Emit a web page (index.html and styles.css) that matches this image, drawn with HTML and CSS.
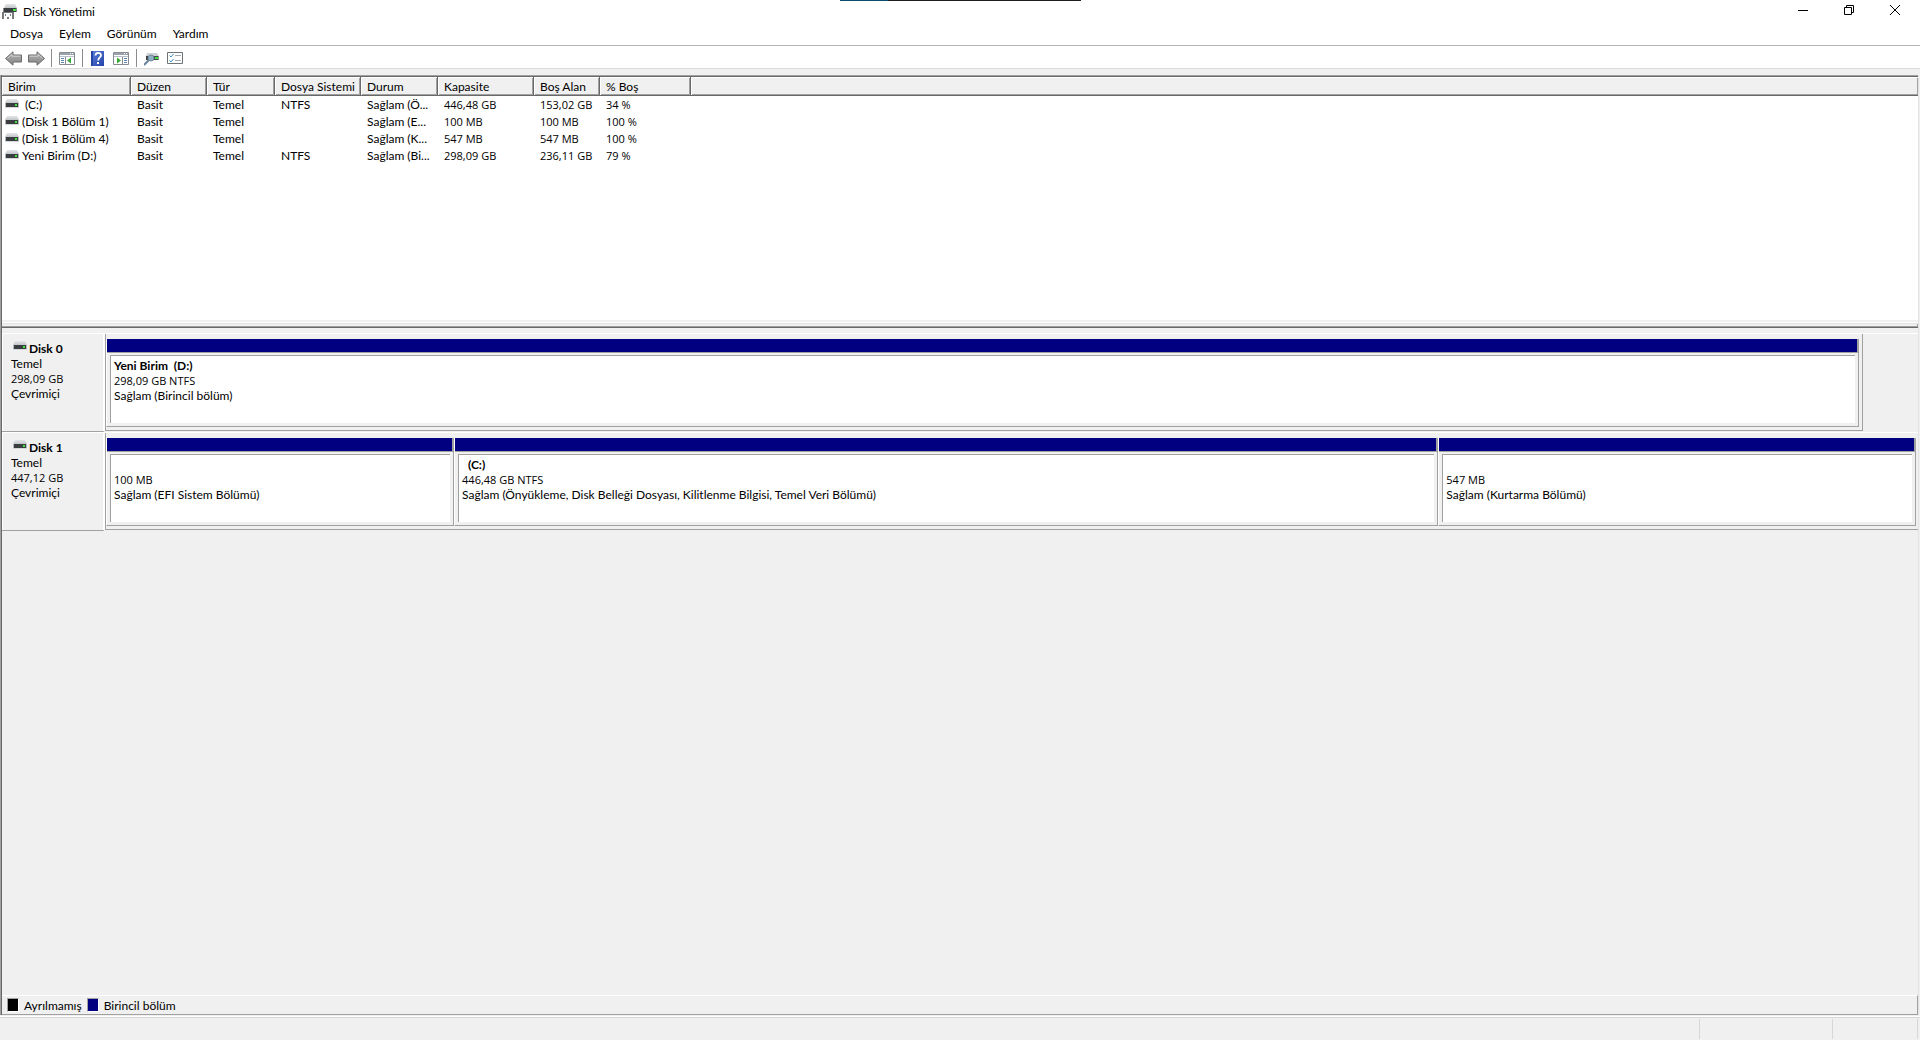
FILE: index.html
```html
<!DOCTYPE html>
<html lang="tr">
<head>
<meta charset="utf-8">
<title>Disk Yönetimi</title>
<link rel="stylesheet" href="styles.css">
</head>
<body>
<svg class="defs" aria-hidden="true">
  <defs>
    <linearGradient id="metal" x1="0" y1="0" x2="0" y2="1"><stop offset="0" stop-color="#e4e6e8"/><stop offset="1" stop-color="#c2c5c8"/></linearGradient>
    <linearGradient id="arrow" x1="0" y1="0" x2="0" y2="1"><stop offset="0" stop-color="#b4b4b4"/><stop offset="1" stop-color="#858585"/></linearGradient>
    <linearGradient id="book" x1="0" y1="0" x2="1" y2="1"><stop offset="0" stop-color="#5c80dc"/><stop offset="1" stop-color="#2443a8"/></linearGradient>
    <symbol id="drive" viewBox="0 0 14 9">
      <path d="M2 0h10l2 4H0z" fill="url(#metal)"/>
      <path d="M0 4h14v4H0z" fill="#3b3e40"/>
      <path d="M0 4h1v4H0zM13 4h1v4h-1z" fill="#b4b8bb"/>
      <path d="M0 8h14v1H0z" fill="#d5d7d9"/>
      <path d="M10 5h2v2h-2z" fill="#3fe53f"/>
    </symbol>
    <symbol id="left-arrow" viewBox="0 0 17 15">
      <path d="M.5 7.500L8 .8v3.200h8.500v7H8v3.200z" fill="url(#arrow)" stroke="#6b6b6b"/>
      <path d="M2.500 7.500L7 3.300v1.900h8.300" fill="none" stroke="#cfcfcf"/>
    </symbol>
  </defs>
</svg>
<div class="taskbar-edge"></div>
<div class="window">
  <header class="titlebar">
    <svg class="app-icon" viewBox="0 0 16 16">
      <path d="M4 0h9l2 4H2z" fill="url(#metal)"/>
      <path d="M1 4h14v4H1z" fill="#3b3e40"/><path d="M1 4h1v4H1zM14 4h1v4h-1z" fill="#85898c"/>
      <path d="M11 5h3v2h-3z" fill="#3fe53f"/>
      <path d="M0 8h12v7H0z" fill="#75797c"/>
      <path d="M2 9h8v6H2z" fill="#fff"/><path d="M3 10h1v2H3zM8 10h1v2H8zM5 13h2v2H5z" fill="#75797c"/>
    </svg>
    <h1 class="title">Disk Yönetimi</h1>
    <div class="window-controls">
      <button type="button" aria-label="Simge durumuna küçült"><svg viewBox="0 0 10 10"><path d="M0 5.500h10"/></svg></button>
      <button type="button" aria-label="Geri yükle"><svg viewBox="0 0 10 10"><path d="M.5 2.500h7v7h-7zM2.500 2.500v-2h7v7h-2"/></svg></button>
      <button type="button" aria-label="Kapat"><svg viewBox="0 0 10 10"><path d="M0 0l10 10M10 0L0 10"/></svg></button>
    </div>
  </header>
  <nav class="menubar">
    <button type="button">Dosya</button>
    <button type="button">Eylem</button>
    <button type="button">Görünüm</button>
    <button type="button">Yardım</button>
  </nav>
  <div class="toolbar">
    <button type="button" aria-label="Geri"><svg viewBox="0 0 17 15"><use href="#left-arrow"/></svg></button>
    <button type="button" aria-label="İleri"><svg viewBox="0 0 17 15"><g transform="translate(17 0) scale(-1 1)"><use href="#left-arrow"/></g></svg></button>
    <span class="separator"></span>
    <button type="button" aria-label="Konsol ağacını göster"><svg viewBox="0 0 17 15">
      <path d="M.5 1.500h15v12H.5z" fill="#fff" stroke="#878c92"/><path d="M1 2h14v2H1z" fill="#9ba3ac"/><path d="M11 2h1v1h-1zM13 2h1v1h-1z" fill="#fff"/><path d="M1 5h14v1H1z" fill="#b9c0c7"/>
      <path d="M6 6h1v7H6z" fill="#878c92"/><path d="M2 7h3v1H2zM2 9h3v1H2zM2 11h3v1H2z" fill="#5b85a9"/><path d="M8 9.500l4-3v6z" fill="#36a832"/></svg></button>
    <span class="separator"></span>
    <button type="button" aria-label="Yardım"><svg viewBox="0 0 17 15">
      <path d="M1 0h13v15H1z" fill="url(#book)"/><path d="M1 0h2v15H1z" fill="#2545a6"/>
      <path d="M5.500 4.500C5.500 1 11 1 11 4.300 11 6.500 8.200 6.500 8.200 9.500" fill="none" stroke="#fff" stroke-width="1.800"/><path d="M7 11h2v2H7z" fill="#fff"/></svg></button>
    <button type="button" aria-label="Eylem bölmesini göster"><svg viewBox="0 0 17 15">
      <path d="M.5 1.500h15v12H.5z" fill="#fff" stroke="#878c92"/><path d="M1 2h14v2H1z" fill="#9ba3ac"/><path d="M11 2h1v1h-1zM13 2h1v1h-1z" fill="#fff"/><path d="M1 5h14v1H1z" fill="#b9c0c7"/>
      <path d="M9 6h1v7H9z" fill="#878c92"/><path d="M11 7h3v1h-3zM11 9h3v1h-3zM11 11h3v1h-3z" fill="#5b85a9"/><path d="M8 9.500l-4-3v6z" fill="#36a832"/></svg></button>
    <span class="separator"></span>
    <button type="button" aria-label="Diskleri yeniden tara"><svg viewBox="0 0 17 15">
      <path d="M3 2h10l2 3H2z" fill="#cfd2d4"/><path d="M2 5h13v4H2z" fill="#3e4346"/><path d="M14 5h1v4h-1z" fill="#8b8f92"/><path d="M11 6h3v2h-3z" fill="#3fe53f"/>
      <path d="M5 9l-5 5" stroke="#68839a" stroke-width="2"/><circle cx="7" cy="7" r="3" fill="#8fb0c4" stroke="#6f8796"/></svg></button>
    <button type="button" aria-label="Görünüm ayarları"><svg viewBox="0 0 17 15">
      <path d="M.5 1.500h15v11H.5z" fill="#fff" stroke="#6e7378"/><path d="M8 4h6v1H8zM8 9h6v1H8z" fill="#a6abb0"/>
      <path d="M2.500 4.500L4 6l2.500-3M2.500 9.500L4 11l2.500-3" fill="none" stroke="#3b8cc9"/></svg></button>
  </div>
  <main class="console">
    <section class="volume-list">
      <table>
        <colgroup><col class="c-name"><col class="c-layout"><col class="c-type"><col class="c-fs"><col class="c-status"><col class="c-capacity"><col class="c-free"><col class="c-percent"><col></colgroup>
        <thead><tr><th>Birim</th><th>Düzen</th><th>Tür</th><th>Dosya Sistemi</th><th>Durum</th><th>Kapasite</th><th>Boş Alan</th><th>% Boş</th><th></th></tr></thead>
        <tbody>
          <tr><td><svg class="drive"><use href="#drive"/></svg>&nbsp;(C:)</td><td>Basit</td><td>Temel</td><td>NTFS</td><td>Sağlam (Ö...</td><td class="size">446,48 GB</td><td class="size">153,02 GB</td><td class="size">34 %</td><td></td></tr>
          <tr><td><svg class="drive"><use href="#drive"/></svg>(Disk 1 Bölüm 1)</td><td>Basit</td><td>Temel</td><td></td><td>Sağlam (E...</td><td class="size">100 MB</td><td class="size">100 MB</td><td class="size">100 %</td><td></td></tr>
          <tr><td><svg class="drive"><use href="#drive"/></svg>(Disk 1 Bölüm 4)</td><td>Basit</td><td>Temel</td><td></td><td>Sağlam (K...</td><td class="size">547 MB</td><td class="size">547 MB</td><td class="size">100 %</td><td></td></tr>
          <tr><td><svg class="drive"><use href="#drive"/></svg>Yeni Birim (D:)</td><td>Basit</td><td>Temel</td><td>NTFS</td><td>Sağlam (Bi...</td><td class="size">298,09 GB</td><td class="size">236,11 GB</td><td class="size">79 %</td><td></td></tr>
        </tbody>
      </table>
    </section>
    <div class="splitter"></div>
    <section class="disk-map">
      <article class="disk">
        <div class="disk-label">
          <h2><svg class="drive"><use href="#drive"/></svg>Disk 0</h2>
          <p>Temel</p><p class="size">298,09 GB</p><p>Çevrimiçi</p>
        </div>
        <div class="partitions short">
          <div class="partition whole"><div class="stripe"></div><div class="info"><h3>Yeni Birim&nbsp; (D:)</h3><p class="size">298,09 GB NTFS</p><p>Sağlam (Birincil bölüm)</p></div></div>
        </div>
      </article>
      <article class="disk">
        <div class="disk-label">
          <h2><svg class="drive"><use href="#drive"/></svg>Disk 1</h2>
          <p>Temel</p><p class="size">447,12 GB</p><p>Çevrimiçi</p>
        </div>
        <div class="partitions">
          <div class="partition efi"><div class="stripe"></div><div class="info"><h3></h3><p class="size">100 MB</p><p>Sağlam (EFI Sistem Bölümü)</p></div></div>
          <div class="partition system"><div class="stripe"></div><div class="info"><h3>&nbsp; (C:)</h3><p class="size">446,48 GB NTFS</p><p>Sağlam (Önyükleme, Disk Belleği Dosyası, Kilitlenme Bilgisi, Temel Veri Bölümü)</p></div></div>
          <div class="partition recovery"><div class="stripe"></div><div class="info"><h3></h3><p class="size">547 MB</p><p>Sağlam (Kurtarma Bölümü)</p></div></div>
        </div>
      </article>
    </section>
    <footer class="legend">
      <span class="swatch unallocated"></span><span>Ayrılmamış</span>
      <span class="swatch primary"></span><span>Birincil bölüm</span>
    </footer>
  </main>
  <div class="statusbar"><span></span><span></span><span></span></div>
</div>
</body>
</html>
```
FILE: styles.css
```css
* { box-sizing: border-box; }

body {
  margin: 0;
  background: #f0f0f0;
  color: #000;
  font: 12px/15px Lato, "Open Sans", sans-serif;
}

h1, h2, h3, p { margin: 0; font-size: 12px; }
h1 { font-weight: 400; }
button { padding: 0; border: 0; background: none; color: inherit; font: inherit; }
svg { display: block; flex: none; }
.defs { position: absolute; width: 0; height: 0; }
.size { font-family: "Open Sans", sans-serif; font-size: 11px; }

.taskbar-edge {
  position: absolute;
  top: 0;
  left: 840px;
  width: 241px;
  height: 1px;
  background: linear-gradient(90deg, #0a4a6b 48px, #1d1b1c 48px);
}

.window { display: flex; flex-direction: column; min-height: 100vh; }

.titlebar { display: flex; align-items: flex-start; height: 24px; padding-left: 2px; background: #fff; }
.app-icon { width: 16px; height: 16px; margin: 4px 5px 0 0; }
.title { flex: 1; line-height: 24px; }
.window-controls { display: flex; padding-right: 2px; }
.window-controls button { display: grid; place-items: center; width: 46px; height: 20px; }
.window-controls svg { width: 10px; height: 10px; fill: none; stroke: #000; }

.menubar { display: flex; gap: 16px; height: 22px; padding: 0 10px; border-bottom: 1px solid #b4b4b4; background: #fff; }
.menubar button { height: 18px; }

.toolbar { display: flex; align-items: center; gap: 6px; height: 23px; padding: 2px 0 0 5px; border-bottom: 1px solid #dadada; background: #fff; }
.toolbar svg { width: 17px; height: 15px; }
.separator { width: 1px; height: 18px; margin-right: 1px; background: #8c8c8c; }

.console {
  display: flex;
  flex: 1;
  flex-direction: column;
  margin: 6px 1px 2px 0;
  border-left: 1px solid #a0a0a0;
  border-right: 1px solid #e3e3e3;
  box-shadow: inset 1px 0 #696969;
  padding-left: 1px;
}

.volume-list { flex: 245 1 0; border-top: 1px solid #a0a0a0; background: #fff; box-shadow: inset 0 1px #696969; padding-top: 1px; }
table { width: 100%; border-collapse: separate; border-spacing: 0; table-layout: fixed; }
.c-name { width: 129px; }
.c-layout { width: 76px; }
.c-type { width: 68px; }
.c-fs { width: 86px; }
.c-status { width: 77px; }
.c-capacity { width: 96px; }
.c-free { width: 66px; }
.c-percent { width: 91px; }
th, td { overflow: hidden; padding: 0 0 0 6px; text-align: left; white-space: nowrap; font-weight: 400; }
th {
  height: 19px;
  border-right: 1px solid #696969;
  border-bottom: 1px solid #696969;
  background: #f0f0f0;
  box-shadow: inset 1px 1px #fff, inset -1px -1px #a0a0a0;
}
th:last-child { border-right: 0; }
td { height: 17px; }
.drive { display: inline-block; width: 14px; height: 9px; }
td .drive { margin: 0 3px 1px 0; }
td:first-child { padding-left: 3px; }

.splitter { height: 8px; border-top: 2px solid #f0f0f0; border-bottom: 1px solid #696969; background: #f0f0f0; box-shadow: inset 0 1px #fff, inset 0 2px #e3e3e3, inset -1px -1px #a0a0a0; }

.disk-map { flex: 667 1 0; padding-top: 5px; }
.disk { display: flex; height: 99px; border-top: 1px solid #fff; }
.disk-label { width: 103px; padding: 7px 0 0 9px; border-bottom: 1px solid #a0a0a0; border-right: 2px solid #fff; box-shadow: inset 1px 0 #fff; }
.disk-label h2 { display: flex; align-items: flex-start; gap: 2px; padding-left: 2px; }

.partitions { display: flex; flex: 1; height: 97px; padding: 5px 2px 3px 0; border-bottom: 1px solid #a0a0a0; border-left: 1px solid #a0a0a0; }
.partitions.short { flex: none; width: calc(100% - 158px); padding-right: 3px; border-right: 1px solid #a0a0a0; }
.partition { display: flex; flex-direction: column; min-width: 0; border-right: 1px solid #a0a0a0; border-bottom: 1px solid #a0a0a0; border-left: 1px solid #fff; }
.whole { flex: 1; }
.efi { flex: 347 1 0; }
.system { flex: 985 1 0; }
.recovery { flex: 477 1 0; }
.stripe { height: 14px; border-right: 1px solid #a0a0a0; border-bottom: 1px solid #a0a0a0; background: #000080; }
.info { flex: 1; margin: 2px 3px 3px; overflow: hidden; padding: 2px 3px; border-top: 1px solid #a0a0a0; border-left: 1px solid #a0a0a0; background: #fff; white-space: nowrap; }
.info h3 { height: 15px; }

.legend { display: flex; align-items: center; gap: 5px; height: 20px; padding-left: 5px; border: 1px solid #a0a0a0; border-top-color: #fff; border-left: 0; }
.swatch { width: 12px; height: 14px; border: 1px solid #fff; border-top-color: #a0a0a0; border-left-color: #a0a0a0; }
.unallocated { background: #000; }
.primary { background: #000080; }

.statusbar { display: flex; height: 23px; padding: 1px 2px 1px 0; border-top: 1px solid #d7d7d7; box-shadow: 0 -1px #fff; }
.statusbar span { border-right: 1px solid #d7d7d7; }
.statusbar span:nth-child(1) { flex: 1; }
.statusbar span:nth-child(2) { width: 133px; }
.statusbar span:nth-child(3) { width: 85px; }
```
